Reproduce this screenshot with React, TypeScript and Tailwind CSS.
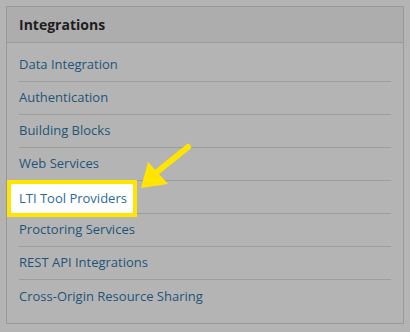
import React from 'react';

const items = [
  'Data Integration',
  'Authentication',
  'Building Blocks',
  'Web Services',
  'LTI Tool Providers',
  'Proctoring Services',
  'REST API Integrations',
  'Cross-Origin Resource Sharing',
];

const HIGHLIGHT = 'LTI Tool Providers';

const App: React.FC = () => {
  return (
    <div
      className="relative w-[410px] h-[332px] bg-[#b4b4b4] p-[6px]"
      style={{ fontFamily: '"Open Sans", "Liberation Sans", sans-serif' }}
    >
      <div className="h-[318px] border border-[#999999] flex flex-col">
        {/* Header */}
        <div className="h-[36px] shrink-0 bg-[#adadad] border-b border-[#999999] px-[12px] flex items-center">
          <h3 className="text-[14px] font-bold text-[#1e1e1e]">Integrations</h3>
        </div>

        {/* Links */}
        <ul className="px-[12px] pt-[6px]">
          {items.map((label, i) => (
            <li
              key={label}
              className={`relative h-[33px] flex items-center ${
                i < items.length - 1 ? 'border-b border-[#9d9d9d]' : ''
              }`}
            >
              {label === HIGHLIGHT ? (
                <span className="absolute left-[-12px] top-[-1px] h-[37px] flex items-center bg-white border-[4px] border-[#ffe500] pl-[8px] pr-[6px] text-[13px] text-[#2b6a98]">
                  {label}
                </span>
              ) : (
                <a className="text-[13px] text-[#1f5478]">{label}</a>
              )}
            </li>
          ))}
        </ul>
      </div>

      {/* Annotation arrow */}
      <svg
        className="absolute left-0 top-0 pointer-events-none"
        width="410"
        height="332"
        viewBox="0 0 410 332"
      >
        <line x1="188" y1="147" x2="157" y2="172" stroke="#ffe500" strokeWidth="6" strokeLinecap="round" />
        <polygon points="141,188 148,162 168,184" fill="#ffe500" />
      </svg>
    </div>
  );
};

export default App;
